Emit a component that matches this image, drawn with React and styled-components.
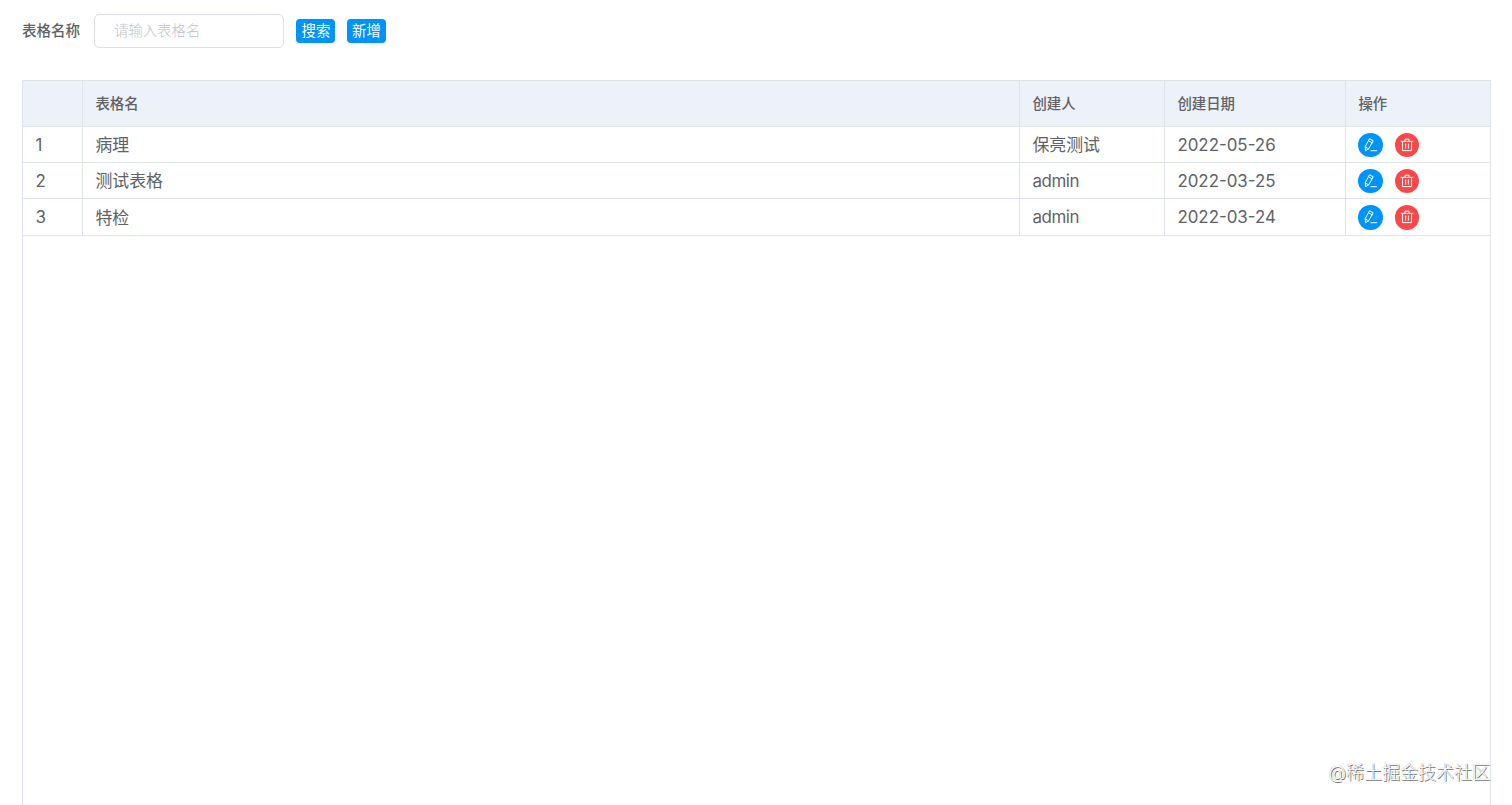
import React from 'react';
import styled, { createGlobalStyle } from 'styled-components';

const GlobalStyle = createGlobalStyle`
    * {
        box-sizing: border-box;
    }

    body {
        margin: 0;
        background: #fff;
        color: #606266;
        font-family: Inter, 'Noto Sans CJK SC', sans-serif;
        overflow: hidden;
    }
`;

const Page = styled.div`
    display: flex;
    flex-direction: column;
    height: 100vh;
    padding: 14px 21px 0 22px;
`;

const SearchBar = styled.div`
    display: flex;
    align-items: center;
    height: 34px;
    margin-bottom: 32px;
`;

const Label = styled.label`
    width: 72.4px;
    font-size: 14.5px;
    font-weight: 500;
    line-height: 34px;
    white-space: nowrap;
`;

const Input = styled.input`
    width: 190px;
    height: 34px;
    padding: 0 18.6px 2px;
    margin-right: 12px;
    border: 1px solid #dcdfe6;
    border-radius: 5px;
    outline: none;
    color: #606266;
    font-family: inherit;
    font-size: 14.4px;

    &::placeholder {
        color: #c0c4cc;
        font-weight: 300;
        opacity: 1;
    }
`;

const Button = styled.button`
    width: 39px;
    height: 24px;
    padding: 0;
    margin-right: 11.6px;
    border: 0;
    border-radius: 4px;
    background: #0094fa;
    color: #fff;
    font-family: inherit;
    font-size: 14.4px;
    line-height: 24px;
    cursor: pointer;
`;

const TableFrame = styled.div`
    flex: 1;
    border: 1px solid #dfe3ea;
    border-bottom: 0;
`;

const Row = styled.div`
    display: grid;
    grid-template-columns: 60px 937px 145px 181px 1fr;
    height: ${props => props.$height}px;
    border-bottom: 1px solid #dfe3ea;
    background: ${props => (props.$head ? '#edf1f8' : '#fff')};
    font-size: ${props => (props.$head ? '14.4px' : '16.9px')};
    font-weight: ${props => (props.$head ? 500 : 400)};
`;

const Cell = styled.div`
    display: flex;
    align-items: center;
    gap: 12px;
    padding-left: 12.4px;
    padding-bottom: ${props => (props.$cjk ? '2px' : 0)};
    border-right: 1px solid #dfe3ea;
    white-space: nowrap;
    letter-spacing: ${props => props.$spacing || 'normal'};

    &:last-child {
        border-right: 0;
    }
`;

const IconButton = styled.button`
    display: flex;
    align-items: center;
    justify-content: center;
    width: 24.4px;
    height: 24.4px;
    padding: 0;
    margin-top: 1px;
    border: 0;
    border-radius: 50%;
    background: ${props => (props.$danger ? '#fa4848' : '#0094fa')};
    color: #fff;
    cursor: pointer;
`;

const Watermark = styled.div`
    position: absolute;
    right: 22px;
    bottom: 19px;
    color: #fff;
    font-size: 18px;
    font-weight: 300;
    line-height: 26px;
    white-space: nowrap;
    text-shadow: 1px 1px 0 #777, 0 0 1px #999;
`;

const EditIcon = () => (
    <svg width="14" height="14" viewBox="0 0 14 14" fill="none" stroke="currentColor" strokeWidth="1" strokeLinejoin="round" strokeLinecap="round">
        <path d="M5.9 0.9 9.2 2.8 4.6 10.9 1.5 12.7 1.3 9Z" />
        <path d="M4.8 2.9 8.1 4.8M1.3 9 4.6 10.9M7 12.7H12.6" />
    </svg>
);

const DeleteIcon = () => (
    <svg width="14" height="14" viewBox="0 0 14 14" fill="none" stroke="currentColor" strokeWidth="1" strokeLinejoin="round" strokeLinecap="round">
        <path d="M1 3.4H13M2.5 3.4V12.6H11.5V3.4M5 3.2V1.2H9V3.2M5.6 5.9V10.2M8.4 5.9V10.2" />
    </svg>
);

const rows = [
    { id: 1, name: '病理', creator: '保亮测试', date: '2022-05-26', height: 36 },
    { id: 2, name: '测试表格', creator: 'admin', date: '2022-03-25', height: 36 },
    { id: 3, name: '特检', creator: 'admin', date: '2022-03-24', height: 37 },
];

const App = () => {
    return (
        <>
            <GlobalStyle />
            <Page>
                <SearchBar>
                    <Label htmlFor="table-name">表格名称</Label>
                    <Input id="table-name" placeholder="请输入表格名" />
                    <Button>搜索</Button>
                    <Button>新增</Button>
                </SearchBar>
                <TableFrame>
                    <Row $head $height={46}>
                        <Cell />
                        <Cell $cjk>表格名</Cell>
                        <Cell $cjk>创建人</Cell>
                        <Cell $cjk>创建日期</Cell>
                        <Cell $cjk>操作</Cell>
                    </Row>
                    {rows.map(row => (
                        <Row key={row.id} $height={row.height}>
                            <Cell>{row.id}</Cell>
                            <Cell $cjk>{row.name}</Cell>
                            <Cell
                                $cjk={row.creator !== 'admin'}
                                $spacing={row.creator === 'admin' ? '-0.4px' : undefined}
                            >
                                {row.creator}
                            </Cell>
                            <Cell>{row.date}</Cell>
                            <Cell>
                                <IconButton aria-label="edit"><EditIcon /></IconButton>
                                <IconButton $danger aria-label="delete"><DeleteIcon /></IconButton>
                            </Cell>
                        </Row>
                    ))}
                </TableFrame>
            </Page>
            <Watermark>@稀土掘金技术社区</Watermark>
        </>
    );
};

export default App;
